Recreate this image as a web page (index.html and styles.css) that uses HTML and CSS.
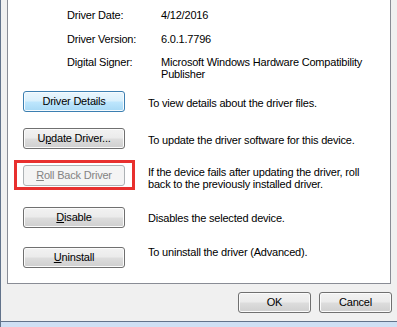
FILE: index.html
```html
<!DOCTYPE html>
<html lang="en">
<head>
<meta charset="utf-8">
<title>Driver</title>
<link rel="stylesheet" href="styles.css">
</head>
<body>
<div class="window">
  <div class="sheet">
    <div class="panel">
      <div class="info">
        <div class="label">Driver Date:</div>
        <div class="value">4/12/2016</div>
        <div class="label">Driver Version:</div>
        <div class="value">6.0.1.7796</div>
        <div class="label">Digital Signer:</div>
        <div class="value">Microsoft Windows Hardware Compatibility Publisher</div>
      </div>
      <div class="actions">
        <div class="action">
          <button class="btn btn-default">Driver Details</button>
          <p class="desc desc-mid">To view details about the driver files.</p>
        </div>
        <div class="action">
          <button class="btn">U<u>p</u>date Driver...</button>
          <p class="desc desc-mid">To update the driver software for this device.</p>
        </div>
        <div class="action">
          <span class="marked"><button class="btn btn-disabled" disabled><u>R</u>oll Back Driver</button></span>
          <p class="desc desc-top">If the device fails after updating the driver, roll back to the previously installed driver.</p>
        </div>
        <div class="action action-spaced">
          <button class="btn"><u>D</u>isable</button>
          <p class="desc desc-low">Disables the selected device.</p>
        </div>
        <div class="action action-last">
          <button class="btn"><u>U</u>ninstall</button>
          <p class="desc desc-raised">To uninstall the driver (Advanced).</p>
        </div>
      </div>
    </div>
    <div class="footer">
      <button class="btn btn-dialog">OK</button>
      <button class="btn btn-dialog">Cancel</button>
    </div>
  </div>
  <div class="frame-bottom"></div>
</div>
</body>
</html>
```

FILE: styles.css
```css
* { box-sizing: border-box; }

html, body {
  margin: 0;
  padding: 0;
}

body {
  width: 397px;
  height: 327px;
  overflow: hidden;
  background: #f0f0f0;
  font-family: "Liberation Sans", Arial, sans-serif;
  font-size: 11px;
  letter-spacing: -0.2px;
  color: #000;
}

.window {
  display: flex;
  flex-direction: column;
  height: 327px;
  border-left: 1px solid #62738b;
}

.sheet {
  height: 322px;
  border-bottom: 1px solid #62738b;
  padding-left: 6px;
  display: flex;
  flex-direction: column;
}

.panel {
  width: 384px;
  height: 284px;
  background: #fff;
  border: 1px solid #898c95;
  border-top: none;
  padding-left: 15px;
}

.info {
  display: grid;
  grid-template-columns: 94px 215px;
  row-gap: 11.5px;
  padding-top: 9px;
  padding-left: 44px;
  line-height: 12px;
}

.actions {
  display: flex;
  flex-direction: column;
  margin-top: 11px;
}

.action {
  display: flex;
  align-items: flex-start;
  height: 21px;
}

.action + .action { margin-top: 16px; }
.action.action-spaced { margin-top: 21px; }
.action.action-last { margin-top: 19px; }

.desc {
  margin: 0 0 0 23px;
  width: 228px;
  line-height: 12px;
}

.desc-mid { margin-top: 6px; }
.desc-top { margin-top: 1px; }
.desc-low { margin-top: 5px; }
.desc-raised { margin-top: -1px; }

.btn {
  flex: none;
  width: 102px;
  height: 21px;
  padding: 0;
  margin: 0;
  font: inherit;
  letter-spacing: inherit;
  line-height: 19px;
  color: #000;
  text-align: center;
  border: 1px solid #707070;
  border-radius: 3px;
  background: linear-gradient(#f2f2f2 0%, #ebebeb 48%, #dddddd 52%, #cfcfcf 100%);
  box-shadow: inset 0 0 0 1px #fbfbfb;
}

.btn u { text-decoration: underline; text-underline-offset: 1px; }

.btn-default {
  border-color: #3c7fb1;
  background: linear-gradient(#eaf6fd 0%, #d9f0fc 48%, #bee6fd 52%, #a7d9f5 100%);
  box-shadow: inset 0 0 0 1px #f6fbfe;
}

.btn-disabled {
  color: #838383;
  border-color: #adb2b5;
  background: #f4f4f4;
  box-shadow: none;
}

.marked {
  position: relative;
  display: block;
  flex: none;
}

.marked::after {
  content: "";
  position: absolute;
  top: -5px;
  left: -9px;
  right: -10px;
  bottom: -4px;
  border: 3px solid #e8302e;
}

.footer {
  flex: 1;
  display: flex;
  justify-content: flex-end;
  align-items: flex-start;
  gap: 8px;
  padding-top: 8px;
  padding-right: 5px;
}

.btn-dialog {
  width: 73px;
  height: 21px;
}

.frame-bottom {
  flex: 1;
  background: #cfe0f4;
}
```
